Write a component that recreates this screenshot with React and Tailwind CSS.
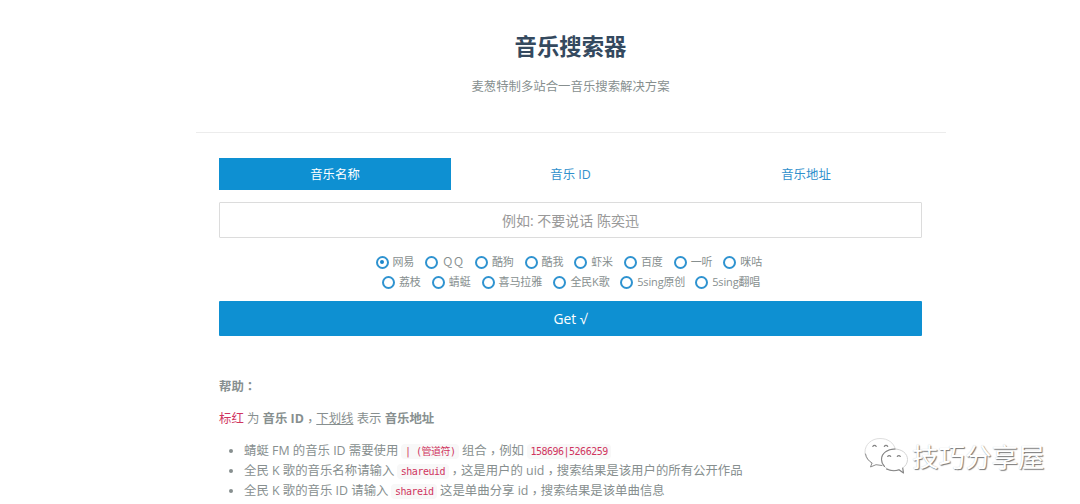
import { clsx } from 'clsx';

const tabs = ['音乐名称', '音乐 ID', '音乐地址'];

const siteRows = [
  [
    { label: '网易', width: 'w-[49.7px]' },
    { label: 'ＱＱ', width: 'w-[49.7px]' },
    { label: '酷狗', width: 'w-[49.7px]' },
    { label: '酷我', width: 'w-[49.7px]' },
    { label: '虾米', width: 'w-[49.7px]' },
    { label: '百度', width: 'w-[49.7px]' },
    { label: '一听', width: 'w-[49.7px]' },
    { label: '咪咕', width: 'w-[40px]' },
  ],
  [
    { label: '荔枝', width: 'w-[49.8px]' },
    { label: '蜻蜓', width: 'w-[49.8px]' },
    { label: '喜马拉雅', width: 'w-[71.8px]' },
    { label: '全民K歌', width: 'w-[66.8px]' },
    { label: '5sing原创', width: 'w-[75px]' },
    { label: '5sing翻唱', width: 'w-[60px]' },
  ],
];

function Radio({ label, width, checked }) {
  return (
    <label className={clsx('flex shrink-0 items-center gap-[4px] whitespace-nowrap', width)}>
      <span className="flex size-[13px] shrink-0 items-center justify-center rounded-full border-2 border-[#2f93d0]">
        {checked && <span className="size-[4px] rounded-full bg-[#1b86cb]" />}
      </span>
      <span className="tracking-[-0.15px]">{label}</span>
    </label>
  );
}

function Code({ children }) {
  return (
    <code className="mx-[3px] rounded-sm bg-[#f8f8f8] px-[3.5px] py-[2px] font-['DejaVu_Sans_Mono','Noto_Sans_CJK_SC',monospace] text-[10px] tracking-[-0.5px] text-[#d0355f]">
      {children}
    </code>
  );
}

// the TC face centers full-width punctuation in its cell
function Punct({ children, className }) {
  return (
    <span lang="zh-TW" className={clsx("font-['Noto_Sans_CJK_TC',sans-serif] leading-none", className)}>
      {children}
    </span>
  );
}

function Comma({ className }) {
  return <Punct className={clsx('align-[-3px]', className)}>，</Punct>;
}

function WechatMark() {
  return (
    <svg width="44" height="38" viewBox="0 0 44 38" fill="none" strokeLinecap="round" strokeLinejoin="round">
      <path d="M9 26.500C4 24 1 20 1 15 1 7.500 7.500 1.500 16 1.500c8 0 13.800 4.300 15.300 10.500" stroke="#dedede" />
      <path d="M1.500 17c.8 4 3 6.800 6.500 9l-1.500 4 5.500-2.300 6 .8" stroke="#8c8c8c" />
      <path d="M30.500 12C23 12 17.500 16.300 17.500 22.500S23 33.500 30.500 33.500c1.600 0 3.100-.2 4.500-.7l4.500 3.200-.8-5c3-2 4.800-5 4.800-8.500C43.500 16.500 38 12 30.500 12Z" fill="#fff" stroke="#d4d4d4" />
      <path d="M31 12c-7.500 0-13.500 4.300-13.500 10.500 0 2.700 1 5 3 7M22.500 32c3.500 1.800 8.500 2.200 12.500.8l4.500 3.200-.8-5" stroke="#858585" strokeWidth="1.100" />
      <path d="M8.800 9.500c.7-1.500 2.700-1.500 3.400 0M20.300 9.500c.7-1.500 2.700-1.500 3.400 0M23.700 19.500c.6-1.300 2.400-1.300 3 0M33.300 19.500c.6-1.300 2.400-1.300 3 0" stroke="#858585" strokeWidth="1.200" />
    </svg>
  );
}

export default function App() {
  return (
    <div className="relative h-[504px] overflow-hidden bg-white font-['Open_Sans','Noto_Sans_CJK_SC',sans-serif] text-[12.4px] text-[#878f8f]" lang="zh-CN">
      <main className="ml-[196px] w-[750px]">
        <header className="flex h-[133px] flex-col items-center border-b border-[#ececec] pt-[31px] pr-[1px]">
          <h1 className="text-[22.4px] leading-[32px] font-bold text-[#34495e]">音乐搜索器</h1>
          <p className="mt-[14px] leading-[20px]">麦葱特制多站合一音乐搜索解决方案</p>
        </header>

        <div className="pt-[25px] pr-[24px] pl-[23px]">
          <nav className="flex gap-[3.5px]">
            {tabs.map((tab, i) => (
              <button
                key={tab}
                className={clsx('h-[32px] flex-1 pt-px leading-[32px]', i === 0 ? 'bg-[#0e90d2] text-white' : 'text-[#2f8fcc]')}
              >
                {tab}
              </button>
            ))}
          </nav>

          <input
            className="mt-[12px] block h-[36px] w-full rounded-[1px] border border-[#dcdcdc] text-center text-[14px] placeholder:text-[#999]"
            placeholder="例如: 不要说话 陈奕迅"
          />

          <div className="mt-[14px] text-[11px] leading-[20px]">
            {siteRows.map((row, r) => (
              <div key={r} className={clsx('flex h-[20px]', r === 0 ? 'pl-[156.5px]' : 'pl-[163px]')}>
                {row.map((site, i) => (
                  <Radio key={site.label} label={site.label} width={site.width} checked={r === 0 && i === 0} />
                ))}
              </div>
            ))}
          </div>

          <button className="mt-[9px] block h-[35px] w-full rounded-[1px] bg-[#0e90d2] pt-px text-[13.8px] text-white">
            Get √
          </button>

          <section className="pt-[41px] leading-[20px]">
            <p className="h-[20px] font-bold">帮助<Punct>：</Punct></p>
            <p className="mt-[12px] h-[20px]">
              <span className="text-[#d0355f]">标红</span> 为 <b>音乐 ID</b><Comma /><u>下划线</u> 表示 <b>音乐地址</b>
            </p>
            <ul className="mt-[12px] list-disc pl-[25px] whitespace-nowrap">
              <li className="h-[20px]">
                蜻蜓 FM 的音乐 ID 需要使用<Code>| (管道符)</Code>组合<Comma />例如<Code>158696|5266259</Code>
              </li>
              <li className="h-[20px]">
                全民 K 歌的音乐名称请输入<Code>shareuid</Code><Comma className="-ml-[3px]" />这是用户的 uid<Comma />搜索结果是该用户的所有公开作品
              </li>
              <li className="h-[20px]">
                全民 K 歌的音乐 ID 请输入<Code>shareid</Code>这是单曲分享 id<Comma />搜索结果是该单曲信息
              </li>
            </ul>
          </section>
        </div>
      </main>

      <div className="absolute top-[436px] left-[864px] flex items-center gap-[4px]">
        <WechatMark />
        <span className="pt-[2px] text-[26.5px] leading-[38px] whitespace-nowrap text-white [text-shadow:1px_1px_1px_#777,0_0_1px_#ccc]">
          技巧分享屋
        </span>
      </div>
    </div>
  );
}
